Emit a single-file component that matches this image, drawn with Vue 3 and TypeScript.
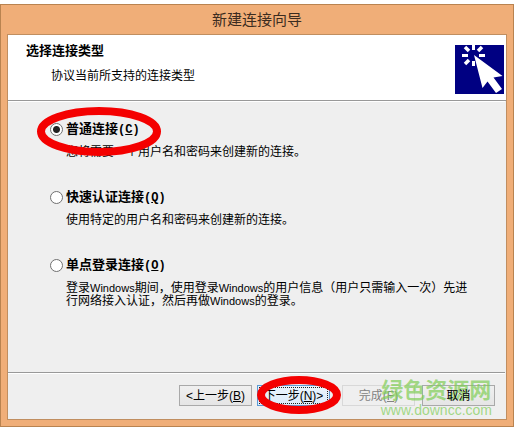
<script setup lang="ts">
import { ref } from 'vue'

interface ConnectionOption {
  id: string
  label: string
  key: string
  lines: { text: string; latin?: boolean }[][]
}

const selected = ref('normal')

const options: ConnectionOption[] = [
  {
    id: 'normal',
    label: '普通连接',
    key: 'C',
    lines: [[{ text: '您将需要一个用户名和密码来创建新的连接。' }]],
  },
  {
    id: 'quick',
    label: '快速认证连接',
    key: 'Q',
    lines: [[{ text: '使用特定的用户名和密码来创建新的连接。' }]],
  },
  {
    id: 'single',
    label: '单点登录连接',
    key: 'O',
    lines: [
      [
        { text: '登录' },
        { text: 'Windows', latin: true },
        { text: '期间，使用登录' },
        { text: 'Windows', latin: true },
        { text: '的用户信息（用户只需输入一次）先进' },
      ],
      [
        { text: '行网络接入认证，然后再做' },
        { text: 'Windows', latin: true },
        { text: '的登录。' },
      ],
    ],
  },
]
</script>

<template>
  <main class="window">
    <h1 class="title">新建连接向导</h1>
    <form class="client" @submit.prevent>
      <header class="head">
        <div class="head-text">
          <h2>选择连接类型</h2>
          <p>协议当前所支持的连接类型</p>
        </div>
        <svg class="logo" viewBox="0 0 49 49" aria-hidden="true">
          <rect width="49" height="49" fill="#000082" />
          <g stroke="#fff" stroke-width="3">
            <path d="M18.500 0V5M18.500 16V21M7 10.500H13M24 10.500H30" />
            <path d="M10 2L14 6M27 2L23 6M10 19L14 15" stroke-width="3.500" />
          </g>
          <path d="M19 10L47.500 31L38.500 32.500L47 44L41 48L32.500 36.500L27.500 43Z" fill="#fff" />
        </svg>
      </header>

      <div class="body">
        <section v-for="option in options" :key="option.id" class="option">
          <div class="choice">
            <input :id="option.id" v-model="selected" type="radio" name="connection" :value="option.id" />
            <label :for="option.id">{{ option.label }}<span class="key">(<u>{{ option.key }}</u>)</span></label>
          </div>
          <p class="desc">
            <span v-for="(line, i) in option.lines" :key="i" class="line"><span v-for="(part, j) in line" :key="j" :class="{ latin: part.latin }">{{ part.text }}</span></span>
          </p>
        </section>
        <svg class="ring ring-option" viewBox="0 0 124 49" aria-hidden="true">
          <ellipse cx="62" cy="24.500" rx="58" ry="20.500" />
        </svg>
      </div>

      <footer class="foot">
        <button type="button">&lt;上一步(<u>B</u>)</button>
        <div class="next">
          <button type="submit" class="primary">下一步(<u>N</u>)&gt;</button>
          <svg class="ring ring-next" viewBox="0 0 84 38" aria-hidden="true">
            <ellipse cx="42" cy="19" rx="38" ry="15" />
          </svg>
        </div>
        <button type="button" class="finish" disabled>完成(<u>F</u>)</button>
        <button type="button"><span class="cancel-text">取消</span></button>
        <div class="watermark">
          <span class="mark-name">绿色资源网</span>
          <span class="mark-site">www.downcc.com</span>
        </div>
      </footer>
    </form>
  </main>
</template>

<style>
body {
  background: #fff;
}
</style>

<style scoped>
.window {
  box-sizing: border-box;
  margin: 4px 1px 0 0;
  padding: 0 6px 6px;
  border: 1px solid #b98350;
  background: #f0ae78;
  color: #000;
  font: 12px/14px "Liberation Sans", "Noto Sans CJK SC", sans-serif;
}

h1,
h2,
p {
  margin: 0;
}

.title {
  color: #3c2c20;
  font-size: 15px;
  font-weight: 400;
  line-height: 29px;
  text-align: center;
}

.client {
  border: 1px solid #c08e60;
  background: #efefef;
}

.head {
  display: flex;
  justify-content: space-between;
  align-items: flex-start;
  padding: 9px 2px 6px 18px;
  border-bottom: 1px solid #999;
  background: #fff;
}

.head h2 {
  font-size: 13px;
  line-height: 14px;
}

.head p {
  margin: 11px 0 0 25px;
}

.logo {
  width: 49px;
  height: 49px;
  margin: 1px 0 0;
}

.body {
  position: relative;
  display: flex;
  flex-direction: column;
  gap: 30px;
  margin-right: 1px;
  padding: 20px 24px 64px 42px;
  border-top: 1px solid #fff;
  border-bottom: 1px solid #999;
}

.choice {
  display: flex;
  align-items: center;
  gap: 3px;
  height: 14px;
}

.choice input {
  appearance: none;
  box-sizing: border-box;
  width: 13px;
  height: 13px;
  margin: 0;
  border: 1px solid #707070;
  border-radius: 50%;
  background: #fff;
}

.choice input:checked {
  background: radial-gradient(circle, #222 3px, #fff 4px);
}

.choice label {
  font-size: 13px;
  font-weight: 700;
}

.key {
  font-family: "Liberation Mono", monospace;
  font-size: 12px;
}

.desc {
  margin: 10px 0 0 16px;
  line-height: 13px;
}

.option {
  min-height: 38px;
}

.line {
  display: block;
  white-space: nowrap;
}

.latin {
  font-size: 11px;
}

.foot {
  position: relative;
  display: flex;
  justify-content: flex-end;
  gap: 5px;
  margin-right: 1px;
  padding: 11px 10px 13px;
  border-top: 1px solid #fff;
}

.foot button {
  box-sizing: border-box;
  width: 73px;
  height: 21px;
  padding: 0;
  border: 1px solid #a9a9a9;
  border-radius: 0;
  background: linear-gradient(#f0f0f0, #e5e5e5);
  color: #000;
  font: inherit;
  white-space: nowrap;
}

.foot .primary {
  border-color: #5b9bd5;
  outline: 1px dotted #222;
  outline-offset: -3px;
  background: linear-gradient(#ebf4fc, #dcecfb);
}

.foot .finish {
  margin: 0 2px 0 7px;
  border-color: #d8d8d8;
  background: #efefef;
  color: #838383;
}

.cancel-text {
  position: relative;
  z-index: 2;
}

.next {
  position: relative;
}

.ring {
  position: absolute;
  fill: none;
  stroke: #f40000;
  stroke-width: 8px;
  pointer-events: none;
}

.ring-option {
  top: 5px;
  left: 29px;
  width: 124px;
  height: 49px;
}

.ring-next {
  top: -9px;
  left: 0;
  width: 84px;
  height: 38px;
}

.watermark {
  position: absolute;
  z-index: 1;
  top: 5px;
  right: 13px;
  display: flex;
  flex-direction: column;
  align-items: center;
  color: rgba(126, 205, 84, 0.7);
  pointer-events: none;
}

.mark-name {
  font-size: 22px;
  font-weight: 700;
  line-height: 24px;
}

.mark-site {
  font-size: 14px;
  line-height: 14px;
}
</style>
